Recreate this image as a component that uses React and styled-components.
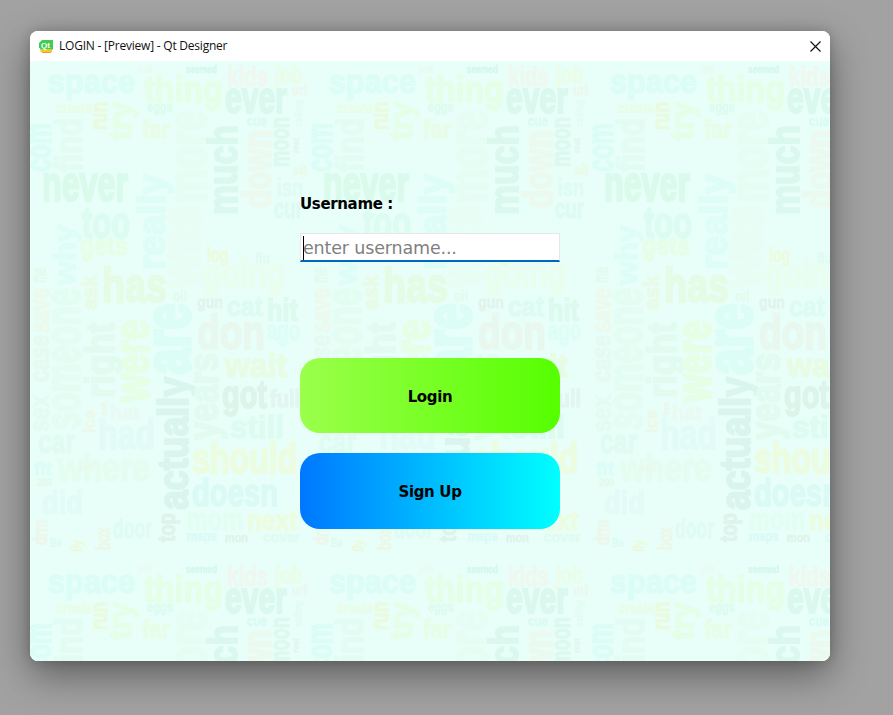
import React from 'react';
import styled, { createGlobalStyle } from 'styled-components';

const GlobalStyle = createGlobalStyle`
  html, body {
    margin: 0;
    height: 100%;
    overflow: hidden;
  }
  #root {
    height: 100%;
  }
`;

const Desktop = styled.div`
  height: 100%;
  box-sizing: border-box;
  padding: 31px 0 0 30px;
  background: #a2a2a2;
`;

const Window = styled.div`
  width: 800px;
  height: 630px;
  border-radius: 8px;
  overflow: hidden;
  display: flex;
  flex-direction: column;
  background: #fff;
  box-shadow: 0 14px 38px rgba(0, 0, 0, 0.42), 0 0 12px rgba(0, 0, 0, 0.18);
`;

const TitleBar = styled.div`
  height: 30px;
  flex: none;
  display: flex;
  align-items: center;
  padding: 0 9px;
  background: #fff;
`;

const Title = styled.span`
  margin-left: 6px;
  font: 12px/16px "Open Sans", "Noto Sans", sans-serif;
  letter-spacing: -0.22px;
  color: #111;
  flex: 1;
`;

const Client = styled.div`
  position: relative;
  flex: 1;
  background: #e7fff8;
  overflow: hidden;
`;

const Cloud = styled.svg`
  position: absolute;
  inset: 0;
`;

const CloudWord = styled.text`
  font-family: "Liberation Sans", sans-serif;
  font-weight: 700;
`;

const Form = styled.div`
  position: relative;
  width: 260px;
  margin-left: 270px;
  padding-top: 133px;
  display: flex;
  flex-direction: column;
`;

const Label = styled.label`
  font: 700 15px/20px "DejaVu Sans", sans-serif;
  letter-spacing: -0.35px;
  color: #000;
`;

const Field = styled.div`
  position: relative;
  height: 29px;
  margin-top: 19px;
  box-sizing: border-box;
  background: #fff;
  border: 1px solid #e6e6e6;
  border-bottom: 2px solid #0067c0;
  display: flex;
  align-items: center;
  padding: 2px 0 0 2px;
`;

const Input = styled.input`
  border: 0;
  outline: 0;
  padding: 0;
  width: 100%;
  background: transparent;
  font: 17.5px/24px "DejaVu Sans", sans-serif;
  letter-spacing: -0.16px;
  &::placeholder {
    color: #808080;
    opacity: 1;
  }
`;

const Caret = styled.span`
  position: absolute;
  left: 2px;
  top: 2px;
  width: 1px;
  height: 24px;
  background: #000;
`;

const Button = styled.button`
  height: ${(p) => p.$h}px;
  margin-top: ${(p) => p.$top}px;
  border: 0;
  border-radius: 20px;
  background: linear-gradient(to right, ${(p) => p.$from}, ${(p) => p.$to});
  font: 700 15px/20px "DejaVu Sans", sans-serif;
  letter-spacing: -0.35px;
  color: #000;
  padding: 2px 0 0;
`;

// [word, x, baseline, length along the text, font size, colour, rotated]
// positions are inside one 281x500 tile, rotated words read bottom to top
const WORDS = [
  ['space', 18, 32, 87, 34, '#d4fbf5'],
  ['thing', 114, 41, 79, 36, '#e4fede'],
  ['seemed', 156, 12, 31, 11, '#c9f1e5'],
  ['jell', 108, 12, 14, 10, '#eaf8ee'],
  ['kids', 197, 25, 41, 28, '#f3f3ea'],
  ['job', 245, 22, 27, 24, '#eafbdd'],
  ['ever', 195, 52, 62, 44, '#d2f3e8'],
  ['url', 262, 34, 15, 14, '#eef2e8'],
  ['create', 26, 52, 36, 15, '#e9fbdc'],
  ['eggs', 117, 51, 26, 15, '#d8f8ea'],
  ['far', 112, 77, 28, 25, '#e7fcde'],
  ['cue', 217, 65, 20, 14, '#d2f7ef'],
  ['sit', 263, 114, 14, 14, '#e9f8dd'],
  ['isn', 247, 135, 26, 24, '#daf8ef'],
  ['cur', 244, 157, 29, 28, '#d6f8ef'],
  ['never', 12, 140, 86, 50, '#d2f8e4'],
  ['too', 52, 177, 48, 44, '#d5f9ec'],
  ['gets', 50, 194, 48, 28, '#e6fcde'],
  ['has', 72, 241, 65, 48, '#e6f8d8'],
  ['oil', 143, 240, 14, 15, '#def8e7'],
  ['log', 177, 201, 21, 20, '#eff9cd'],
  ['flu', 225, 202, 15, 15, '#dcf8ef'],
  ['going', 173, 226, 82, 38, '#ecfdea'],
  ['gun', 167, 247, 26, 17, '#deede3'],
  ['cat', 197, 255, 36, 28, '#d7f9ee'],
  ['hit', 237, 260, 31, 32, '#d4f6e8'],
  ['don', 167, 288, 68, 48, '#ebf4e7'],
  ['ago', 237, 279, 33, 28, '#d6fbf5'],
  ['wait', 195, 316, 62, 34, '#e8f9d8'],
  ['got', 192, 347, 45, 38, '#d7ede3'],
  ['full', 240, 346, 30, 24, '#dfefe7'],
  ['still', 200, 377, 54, 32, '#d7f9ec'],
  ['should', 162, 412, 105, 42, '#f0fad2'],
  ['doesn', 162, 445, 86, 38, '#d3f7f5'],
  ['next', 217, 469, 50, 28, '#f0fad0'],
  ['mom', 157, 469, 56, 32, '#dffdef'],
  ['maps', 157, 480, 30, 14, '#d3f5f5'],
  ['mon', 195, 481, 23, 13, '#d7ece3'],
  ['cover', 233, 481, 37, 14, '#dbf8ec'],
  ['where', 28, 420, 92, 38, '#e2fbed'],
  ['had', 68, 388, 57, 42, '#dff9f7'],
  ['hat', 80, 359, 30, 20, '#ebf6f3'],
  ['car', 8, 392, 37, 34, '#dbf9ee'],
  ['fit', 4, 414, 18, 18, '#d5faf5'],
  ['200', 7, 425, 15, 11, '#e1f5e3'],
  ['did', 12, 453, 41, 34, '#def9f5'],
  ['door', 83, 477, 39, 28, '#dbf9ee'],
  ['Be', 20, 486, 12, 12, '#d7f8ef'],
  ['seal', 48, 410, 16, 9, '#eef6dc'],
  // rotated
  ['run', 77, 69, 28, 24, '#ecf7cd', 1],
  ['try', 101, 79, 38, 32, '#e4fddd', 1],
  ['more', 176, 142, 93, 56, '#e5fcef', 1],
  ['much', 207, 154, 90, 40, '#d2f3e8', 1],
  ['down', 241, 147, 78, 40, '#f0f5e9', 1],
  ['moon', 259, 106, 50, 28, '#d7f5e9', 1],
  ['calling', 272, 66, 27, 11, '#def8ef', 1],
  ['rest', 269, 92, 15, 9, '#e0eee8', 1],
  ['com', 21, 111, 49, 36, '#d4fbf5', 1],
  ['find', 52, 111, 54, 38, '#e1faef', 1],
  ['really', 135, 209, 96, 38, '#d7fbf5', 1],
  ['was', 170, 226, 82, 60, '#e9fcef', 1],
  ['why', 45, 224, 60, 30, '#d7fbf5', 1],
  ['me', 16, 222, 16, 22, '#dff8e9', 1],
  ['someone', 50, 369, 142, 52, '#e1fbef', 1],
  ['save', 19, 272, 45, 28, '#eef6e5', 1],
  ['case', 19, 321, 47, 28, '#e3f8ed', 1],
  ['sex', 19, 371, 37, 28, '#dffaef', 1],
  ['ask', 67, 249, 35, 22, '#e7f8da', 1],
  ['right', 84, 337, 76, 40, '#dff9ed', 1],
  ['were', 119, 341, 82, 50, '#e5fbda', 1],
  ['are', 160, 314, 72, 66, '#d5fbf4', 1],
  ['actually', 158, 449, 133, 42, '#d2efe5', 1],
  ['years', 188, 379, 87, 42, '#def9eb', 1],
  ['ice', 65, 372, 23, 16, '#f0f4df', 1],
  ['ton', 77, 354, 13, 9, '#f0eee3', 1],
  ['top', 145, 481, 29, 24, '#d7ece5', 1],
  ['box', 80, 489, 23, 20, '#eef2df', 1],
  ['drm', 17, 484, 25, 20, '#f0f0e3', 1],
  ['fly', 52, 491, 12, 14, '#eef6cd', 1],
];

function WordCloud() {
  return (
    <Cloud width="800" height="600" aria-hidden="true">
      <defs>
        <pattern id="wordTile" width="281" height="500" patternUnits="userSpaceOnUse">
          {WORDS.map(([word, x, y, len, size, color, rotated]) => (
            <CloudWord
              key={word + x}
              transform={`translate(${x} ${y})${rotated ? ' rotate(-90)' : ''}`}
              fontSize={size}
              fill={color}
              stroke={color}
              strokeWidth={size * 0.05}
              textLength={len}
              lengthAdjust="spacingAndGlyphs"
            >
              {word}
            </CloudWord>
          ))}
        </pattern>
      </defs>
      <rect width="800" height="600" fill="url(#wordTile)" opacity="0.6" />
    </Cloud>
  );
}

function QtLogo() {
  return (
    <svg width="14" height="13" viewBox="0 0 14 13">
      <path d="M3 0H14V9H1.5L0 7.5V3Z" fill="#41cd52" />
      <rect x="1" y="9" width="13" height="1" fill="#b7d64c" />
      <rect x="1.5" y="10" width="11.5" height="2" fill="#f7c81e" />
      <rect x="3" y="12" width="9" height="1" fill="#f09a3e" />
      <text x="2" y="7.5" fontFamily="Liberation Sans" fontSize="8" fontWeight="700" fill="#fff">Qt</text>
    </svg>
  );
}

function CloseIcon() {
  return (
    <svg width="11" height="11" viewBox="0 0 11 11">
      <path d="M0.5 0.5L10.5 10.5M10.5 0.5L0.5 10.5" stroke="#111" strokeWidth="1.15" fill="none" />
    </svg>
  );
}

export default function App() {
  return (
    <>
      <GlobalStyle />
      <Desktop>
        <Window>
          <TitleBar>
            <QtLogo />
            <Title>LOGIN - [Preview] - Qt Designer</Title>
            <CloseIcon />
          </TitleBar>
          <Client>
            <WordCloud />
            <Form>
              <Label>Username :</Label>
              <Field>
                <Input placeholder="enter username..." />
                <Caret />
              </Field>
              <Button $h={75} $top={96} $from="#9bff4b" $to="#55ff00">Login</Button>
              <Button $h={76} $top={20} $from="#0077ff" $to="#00ffff">Sign Up</Button>
            </Form>
          </Client>
        </Window>
      </Desktop>
    </>
  );
}
